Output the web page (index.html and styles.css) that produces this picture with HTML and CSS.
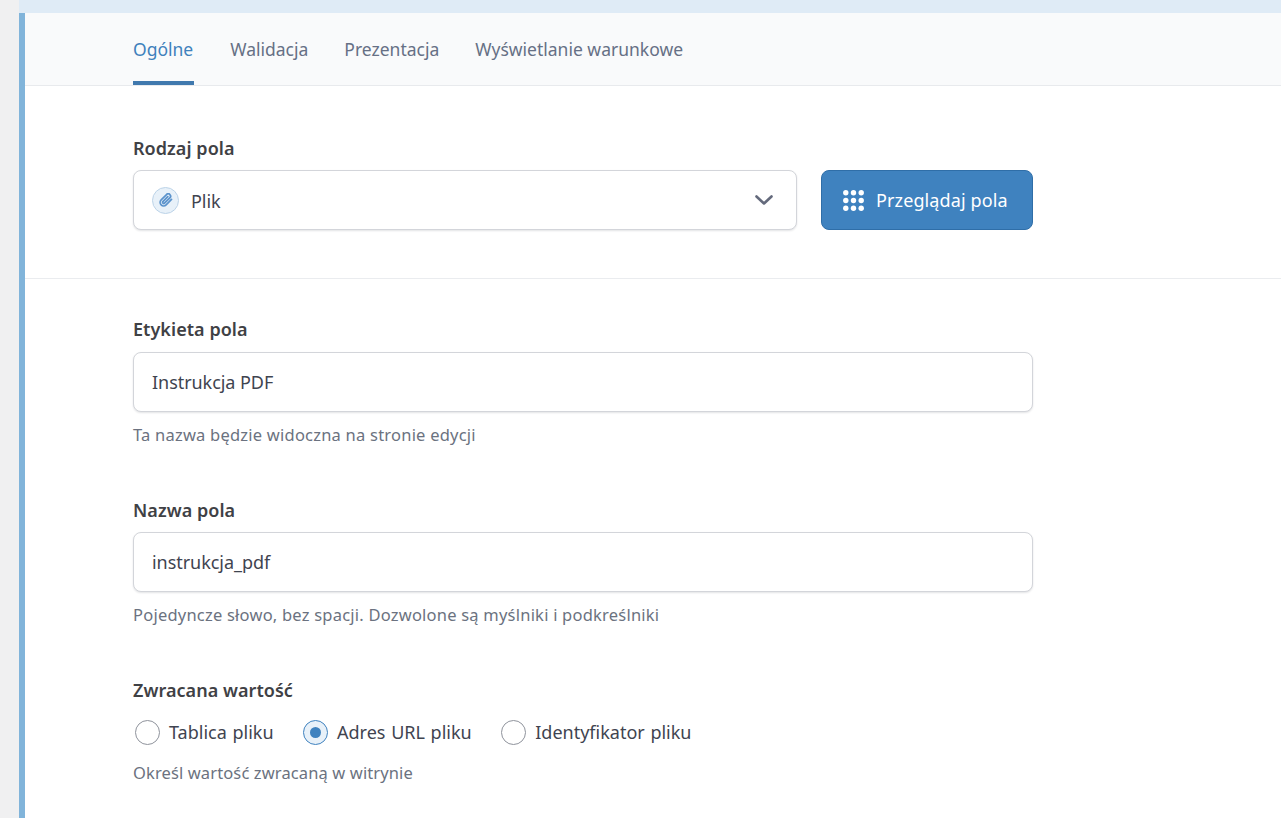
FILE: index.html
```html
<!DOCTYPE html>
<html lang="pl">
<head>
<meta charset="utf-8">
<title>Pole</title>
<link rel="stylesheet" href="styles.css">
</head>
<body>
<div class="topbar"></div>
<main class="panel">
  <nav class="tabs">
    <a class="tab active">Ogólne</a>
    <a class="tab">Walidacja</a>
    <a class="tab">Prezentacja</a>
    <a class="tab">Wyświetlanie warunkowe</a>
  </nav>
  <section class="type-section">
    <div class="label type-label">Rodzaj pola</div>
    <div class="type-row">
      <div class="select">
        <span class="clip">
          <svg width="14" height="14" viewBox="0 0 24 24" fill="none" stroke="#5b93cc" stroke-width="3" stroke-linecap="round" stroke-linejoin="round"><path d="M21.4 11.1l-9.2 9.2a6 6 0 0 1-8.5-8.5l9.2-9.2a4 4 0 0 1 5.7 5.7l-9.2 9.2a2 2 0 0 1-2.8-2.8l8.5-8.5"/></svg>
        </span>
        <span class="select-text">Plik</span>
        <svg class="chev" width="20" height="12" viewBox="0 0 20 12" fill="none" stroke="#646a7c" stroke-width="2.6" stroke-linecap="round" stroke-linejoin="round"><path d="M2.5 2.5L10 9.5l7.5-7"/></svg>
      </div>
      <button class="browse">
        <svg width="21" height="21" viewBox="0 0 21 21" fill="#fff"><circle cx="2.8" cy="2.8" r="2.7"/><circle cx="10.5" cy="2.8" r="2.7"/><circle cx="18.2" cy="2.8" r="2.7"/><circle cx="2.8" cy="10.5" r="2.7"/><circle cx="10.5" cy="10.5" r="2.7"/><circle cx="18.2" cy="10.5" r="2.7"/><circle cx="2.8" cy="18.2" r="2.7"/><circle cx="10.5" cy="18.2" r="2.7"/><circle cx="18.2" cy="18.2" r="2.7"/></svg>
        Przeglądaj pola
      </button>
    </div>
  </section>
  <section class="fields">
    <div class="field">
      <div class="label">Etykieta pola</div>
      <div class="input">Instrukcja PDF</div>
      <div class="hint">Ta nazwa będzie widoczna na stronie edycji</div>
    </div>
    <div class="field">
      <div class="label">Nazwa pola</div>
      <div class="input">instrukcja_pdf</div>
      <div class="hint">Pojedyncze słowo, bez spacji. Dozwolone są myślniki i podkreślniki</div>
    </div>
    <div class="field">
      <div class="label">Zwracana wartość</div>
      <div class="radios">
        <span class="radio-item"><span class="radio"></span>Tablica pliku</span>
        <span class="radio-item"><span class="radio on"></span>Adres URL pliku</span>
        <span class="radio-item"><span class="radio"></span>Identyfikator pliku</span>
      </div>
      <div class="hint radio-hint">Określ wartość zwracaną w witrynie</div>
    </div>
  </section>
</main>
</body>
</html>
```
FILE: styles.css
```css
* { box-sizing: border-box; }
html, body { margin: 0; height: 818px; overflow: hidden; }
body {
  background: #f0f0f1;
  padding-left: 19px;
  font-family: "Noto Sans", "Open Sans", sans-serif;
  font-size: 16px;
  color: #3c3f46;
}
.topbar { height: 13px; background: #dfebf6; }
.panel { height: 805px; background: #fff; border-left: 6px solid #81b4da; }
.tabs {
  display: flex;
  gap: 36px;
  height: 73px;
  padding-left: 108px;
  background: #f9fafb;
  border-bottom: 1px solid #e8eaed;
}
.tab {
  height: 72px;
  padding-top: 23px;
  font-size: 17.5px;
  line-height: 26px;
  color: #667085;
}
.tab.active { color: #3f81bc; border-bottom: 4px solid #4079ae; padding-right: 1px; }
.type-section { padding: 49px 0 48px 108px; border-bottom: 1px solid #eaecef; }
.label { font-weight: 600; font-size: 18px; line-height: 26px; letter-spacing: 0.05px; color: #3f4145; }
.type-row { display: flex; gap: 24px; margin-top: 9px; }
.select, .input {
  height: 60px;
  background: #fff;
  border: 1px solid #d3d5da;
  border-radius: 8px;
  box-shadow: 0 1px 2px rgba(16, 24, 40, .12);
  display: flex;
  align-items: center;
  font-size: 18px;
  letter-spacing: -0.05px;
  color: #3f4450;
}
.select { width: 664px; padding: 0 22px 0 18px; }
.clip {
  width: 27px; height: 27px;
  border-radius: 50%;
  background: #e8f1f9;
  border: 1px solid #bcd3e8;
  display: flex; align-items: center; justify-content: center;
  margin-right: 12px;
}
.select-text { flex: 1; padding-top: 1px; }
.browse {
  width: 212px; height: 60px;
  background: #3f82bf;
  border: 1px solid #2f6ea8;
  border-radius: 8px;
  color: #fff;
  font: inherit;
  font-size: 18px;
  letter-spacing: 0.12px;
  display: flex; align-items: center;
  padding: 0 0 0 21px;
  gap: 12px;
}
.fields { padding: 37px 0 0 108px; width: 1008px; }
.field { margin-bottom: 50px; }
.field:first-child .label { margin-bottom: 10px; }
.field .label { margin-bottom: 9px; }
.input { padding-left: 18px; }
.hint { margin-top: 11px; font-size: 16.5px; line-height: 24px; letter-spacing: 0.22px; color: #6b7280; }
.radio-hint { margin-top: 13px; letter-spacing: 0.12px; }
.radios { display: flex; gap: 29.5px; height: 32px; align-items: center; padding-left: 2px; margin-top: 13px; }
.radio-item { display: flex; align-items: center; gap: 9px; font-size: 18px; word-spacing: 1px; color: #3f4450; }
.radio {
  width: 25px; height: 25px;
  border-radius: 50%;
  border: 1px solid #8f939c;
  background: #fff;
}
.radio.on {
  border-color: #3f82bf;
  background: #e8f1f9;
  display: flex; align-items: center; justify-content: center;
}
.radio.on::after { content: ""; width: 11px; height: 11px; border-radius: 50%; background: #3f82bf; }
```
